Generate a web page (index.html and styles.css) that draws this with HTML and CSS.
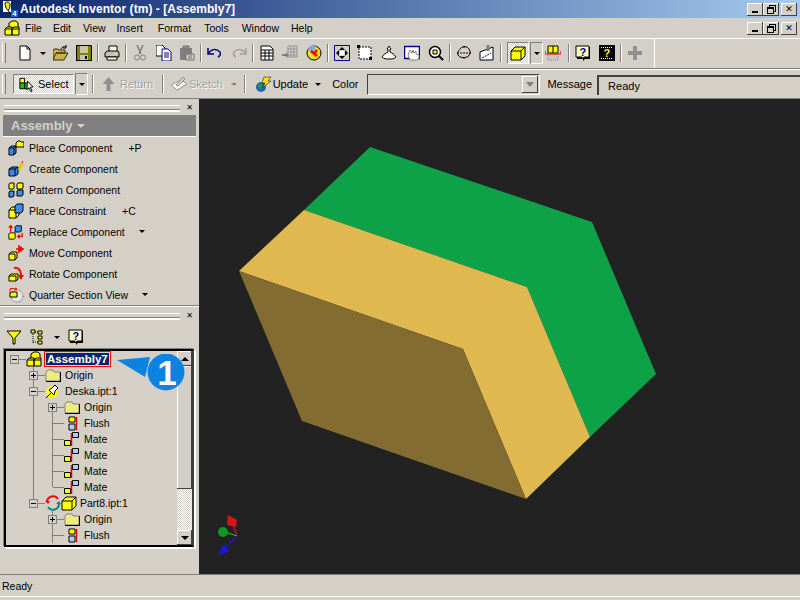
FILE: index.html
```html
<!DOCTYPE html>
<html>
<head>
<meta charset="utf-8">
<title>Autodesk Inventor</title>
<link rel="stylesheet" href="styles.css">
</head>
<body>

<div class="title">
  <svg class="ico16" viewBox="0 0 16 16"><path d="M1 0h8v11H1z" fill="#fff"/><path d="M3 2c2-2 5-1 5 2s-1 5-2 5-3-3-3-7zM6 9l3 5" fill="#e8e820" stroke="#000"/><rect x="9" y="9" width="7" height="7" fill="#1060e0"/><text x="10.500" y="15" class="tiny">4</text></svg>
  <span class="title-text">Autodesk Inventor (tm) - [Assembly7]</span>
  <span class="caps"><b class="cap"><i class="min"></i></b><b class="cap"><i class="rest"></i></b><b class="cap gap"><i class="x">✕</i></b></span>
</div>

<div class="menubar">
  <svg class="ico16" viewBox="0 0 16 16"><use href="#asm"/></svg>
  <span class="m-file">File</span><span>Edit</span><span class="m-view">View</span><span class="m-insert">Insert</span><span class="m-format">Format</span><span class="m-tools">Tools</span><span>Window</span><span>Help</span>
  <span class="caps"><b class="cap"><i class="min"></i></b><b class="cap"><i class="rest"></i></b><b class="cap gap"><i class="x">✕</i></b></span>
</div>

<div class="bar bar1">
  <i class="grip"></i>
  <svg class="t first" viewBox="0 0 16 16"><path d="M3 1h7l3 3v11H3z" fill="#fff" stroke="#000"/><path d="M10 1v3h3" fill="none" stroke="#000"/></svg>
  <i class="drop"></i>
  <svg class="t" viewBox="0 0 16 16"><path d="M0 14V5l1-1h4l1 1h6v3H3l-3 7h11l4-7H3" fill="#c8b050" stroke="#303000"/><path d="M8 4c1-2 3-3 5-2M13 0v3h-3" fill="none" stroke="#000"/></svg>
  <svg class="t" viewBox="0 0 16 16"><path d="M0 0h15l1 1v15H0z" fill="#000"/><path d="M1 1h14v14H1z" fill="#808000"/><path d="M4 1h8v7H4z" fill="#c8c8a0"/><path d="M4 10h8v5H4z" fill="#c0c0c0"/><path d="M9 11h2v3H9z" fill="#000"/></svg>
  <i class="sep"></i>
  <svg class="t" viewBox="0 0 16 16"><path d="M5 1h8v6H5z" fill="#fff" stroke="#000"/><path d="M1 8l2-2h11l1 2v4H1z" fill="#c0c0c0" stroke="#000"/><path d="M3 12h10v3H3z" fill="#fff" stroke="#000"/><path d="M10 9h3" stroke="#ff0"/></svg>
  <i class="sep"></i>
  <svg class="t" viewBox="0 0 16 16"><path d="M5 0l4 9M11 0L7 9" stroke="#808080" stroke-width="1.500" fill="none"/><circle cx="5" cy="12.500" r="2.500" fill="none" stroke="#808080"/><circle cx="11" cy="12.500" r="2.500" fill="none" stroke="#808080"/></svg>
  <svg class="t" viewBox="0 0 16 16"><path d="M0 0h6l3 3v8H0z" fill="#fff" stroke="#000"/><path d="M6 4h6l3 3v9H6z" fill="#fff" stroke="#000080"/><path d="M8 8h5M8 10h5M8 12h5" stroke="#000080"/></svg>
  <svg class="t" viewBox="0 0 16 16"><path d="M1 3h12v12H1z" fill="#808080"/><path d="M4 1h6v3H4z" fill="#909090" stroke="#707070"/><path d="M7 9h8v6H7z" fill="#d4d0c8" stroke="#707070"/><path d="M9 11h4M9 13h4" stroke="#707070"/></svg>
  <i class="sep"></i>
  <svg class="t" viewBox="0 0 16 16"><path d="M1 3v6h6M1 9c3-5 8-6 12-2 1 2 0 4-2 5" fill="none" stroke="#000080" stroke-width="1.500"/></svg>
  <svg class="t" viewBox="0 0 16 16"><path d="M15 3v6H9M15 9c-3-5-8-6-12-2-1 2 0 4 2 5" fill="none" stroke="#a0a0a0" stroke-width="1.500"/></svg>
  <i class="sep"></i>
  <svg class="t" viewBox="0 0 16 16"><path d="M2 1h9l3 3v11H2z" fill="#fff" stroke="#000"/><path d="M2 5h12M2 8h12M2 11h12M6 5v10M10 5v10" stroke="#000"/></svg>
  <svg class="t" viewBox="0 0 16 16"><path d="M6 1h9v11H6z" fill="#d8d8d8" stroke="#909090"/><path d="M6 4h9M6 7h9M6 10h9M9 1v11M12 1v11" stroke="#909090"/><path d="M0 9h4V7l3 3-3 3v-2H0z" fill="#808080"/></svg>
  <svg class="t" viewBox="0 0 16 16"><circle cx="8" cy="8" r="7" fill="#f4e020" stroke="#000"/><path d="M2 4a7 7 0 0 1 8-3l-2 6-2 2z" fill="#80a8e8"/><path d="M5 6l6 5M8 9l3-4" stroke="#f00" stroke-width="2.500"/></svg>
  <i class="sep"></i>
  <svg class="t" viewBox="0 0 16 16"><path d="M.5.5h15v15H.5z" fill="#d4d0c8" stroke="#000080"/><path d="M8 2l3 3H5zM8 14l3-3H5zM2 8l3-3v6zM14 8l-3-3v6z" fill="#000"/><path d="M6 6h4v4H6z" fill="#fff"/></svg>
  <svg class="t" viewBox="0 0 16 16"><path d="M2 2h12v12H2z" fill="#fff" stroke="#000" stroke-dasharray="2 1"/><path d="M0 0h3v3H0zM12 12h3v3h-3z" fill="#000"/></svg>
  <svg class="t" viewBox="0 0 16 16"><path d="M8 1l2 3H9v3c2 1 5 3 6 5-2 2-4 2-7 2s-5 0-7-2c1-2 4-4 6-5V4H6z" fill="#fff" stroke="#000"/></svg>
  <svg class="t" viewBox="0 0 16 16"><path d="M.5 1.500h15v12H.5z" fill="#fff" stroke="#000080" stroke-width="1.500"/><path d="M6 15l-2-5 2-5 2 3 1-3 1 3 2-2v3l3 1v3l-2 2z" fill="#fff" stroke="#808080"/></svg>
  <svg class="t" viewBox="0 0 16 16"><circle cx="7" cy="7" r="5.500" fill="#fff" stroke="#000" stroke-width="1.500"/><path d="M5 5h4v4H5z" fill="#f4f020" stroke="#000"/><path d="M11 11l4 4" stroke="#000" stroke-width="2"/></svg>
  <i class="sep"></i>
  <svg class="t" viewBox="0 0 16 16"><path d="M5 3c2-2 6-2 8 1 2 3 1 7-2 8-3 1-7 1-9-2-1-3 1-5 3-7" fill="none" stroke="#000"/><path d="M1 8h14M8 1v3M8 12v3" stroke="#000" stroke-dasharray="2 1"/></svg>
  <svg class="t" viewBox="0 0 16 16"><path d="M1 7l13-5v13H1z" fill="#fff" stroke="#000"/><path d="M9 0v6" stroke="#808080" stroke-width="3"/><path d="M3 13l9-5" stroke="#000080" stroke-dasharray="2 1"/></svg>
  <i class="sep"></i>
  <span class="pressed"><svg class="t" viewBox="0 0 16 16"><path d="M1 6l4-4h10v9l-4 4H1z" fill="#ff0"/><path d="M1 6h10v9H1zM1 6l4-4h10v9l-4 4M11 6l4-4" fill="none" stroke="#000"/></svg></span>
  <i class="drop boxed"></i>
  <svg class="t sec" viewBox="0 0 16 16"><path d="M3 1h10v7H3z" fill="#ff0" stroke="#000"/><path d="M8 1v7" stroke="#000"/><path d="M3 9h10v6H3z" fill="#c8c8c8" stroke="#808080" stroke-dasharray="1 1"/><path d="M0 6v3h16V6" fill="none" stroke="#f00" stroke-width="1.200"/></svg>
  <i class="sep"></i>
  <svg class="t" viewBox="0 0 16 16"><use href="#helpq"/><text x="4.500" y="11" class="qmark blue">?</text></svg>
  <svg class="t" viewBox="0 0 16 16"><path d="M0 0h16v16H0z"/><path d="M2 2.500h12M2 13.500h12" stroke="#fff" stroke-dasharray="1 1"/><text x="4.500" y="12" class="qmark">?</text></svg>
  <i class="sep"></i>
  <svg class="t" viewBox="0 0 16 16"><path d="M6 1h4v5h5v4h-5v5H6v-5H1V6h5z" fill="#909090"/></svg>
  <i class="bar-end"></i>
</div>

<div class="bar bar2">
  <i class="grip"></i>
  <span class="select-btn"><svg class="sm" viewBox="0 0 18 16"><path d="M2 2h5v5H2z" fill="#ff0" stroke="#000"/><path d="M2 7h5v6H2zM7 7h5v6H7z" fill="#00d000" stroke="#000"/><path d="M10 5l6 6-3 .5 2 4-1.500 .5-2-4-2 2z" fill="#fff" stroke="#000"/></svg>Select</span>
  <i class="drop boxed low"></i>
  <i class="sep s1"></i>
  <span class="off ret"><svg class="sm" viewBox="0 0 14 16"><path d="M7 1l6 7H9v7H5V8H1z" fill="#909090"/></svg>Return</span>
  <i class="sep s2"></i>
  <span class="off sketch"><svg class="sm wide" viewBox="0 0 18 16"><path d="M1 9l10-5 6 4-10 6z" fill="#fff" stroke="#909090"/><path d="M6 9l7-8 2 2-7 7z" fill="#d4d0c8" stroke="#909090"/></svg>Sketch<i class="arrow grey"></i></span>
  <i class="sep s3"></i>
  <span class="update"><svg class="sm wide" viewBox="0 0 18 16"><circle cx="6" cy="11" r="5" fill="#2060c0"/><path d="M3 9l3-2 2 4-3 3z" fill="#20a020"/><path d="M9 1h7l-3 4h3L7 12l3-5H7z" fill="#ffe000" stroke="#000" stroke-width=".5"/></svg>Update<i class="arrow"></i></span>
  <span class="color-label">Color</span>
  <span class="combo"><i class="combo-btn"><i class="arrow grey"></i></i></span>
  <span class="msg-label">Message</span>
  <span class="msg">Ready</span>
</div>

<div class="main">
  <div class="side">
    <div class="pane-head"><i class="rule"></i><i class="close">✕</i></div>
    <div class="panel-title">Assembly <i class="arrow light"></i></div>
    <ul class="cmds">
      <li><svg viewBox="0 0 16 16"><path d="M1 8l2-2h5v7l-2 2H1z" fill="#3c8cf0" stroke="#000"/><path d="M1 8h5v7M6 8l2-2" fill="none" stroke="#000"/><path d="M8 3l2-2h2l1 1h3v5H8z" fill="#ff0" stroke="#000"/></svg><span class="cmd-name">Place Component</span><span class="key">+P</span></li>
      <li><svg viewBox="0 0 16 16"><path d="M1 8l3-2h6v7l-3 2H1z" fill="#3c8cf0" stroke="#000"/><path d="M1 8h6v7M7 8l3-2" fill="none" stroke="#000"/><path d="M11 9l3-7" stroke="#e8c000" stroke-width="2.500"/><path d="M14 2l1-2" stroke="#f00"/></svg><span class="cmd-name">Create Component</span></li>
      <li><svg viewBox="0 0 16 16"><path d="M1 2l1-1h4v5l-1 1H1zM9 2l1-1h5v5l-1 1H9z" fill="#ff0" stroke="#000"/><path d="M1 10l1-1h4v5l-1 1H1zM9 9l1-1h5v5l-1 1H9z" fill="#3c8cf0" stroke="#000"/></svg><span class="cmd-name">Pattern Component</span></li>
      <li><svg viewBox="0 0 16 16"><path d="M1 7l3-3h7v8l-3 3H1z" fill="#ff0" stroke="#000"/><path d="M1 7h7v8" fill="none" stroke="#000"/><path d="M7 3l2-2h6v7l-2 2H7z" fill="#3c8cf0" stroke="#000"/></svg><span class="cmd-name">Place Constraint</span><span class="key">+C</span></li>
      <li><svg viewBox="0 0 18 16"><path d="M8 2l1-1h6v6l-1 1H8z" fill="#3c8cf0" stroke="#000"/><path d="M1 10l1-1h6v6l-1 1H1z" fill="#ff0" stroke="#000"/><path d="M3 2v6M1 3l2-2 2 2M16 9v4h-5M13 11l-2 2 2 2" stroke="#f00" stroke-width="1.500" fill="none"/></svg><span class="cmd-name">Replace Component</span><i class="arrow"></i></li>
      <li><svg viewBox="0 0 16 16"><path d="M1 9l2-2h6v6l-2 2H1z" fill="#ff0" stroke="#000"/><path d="M1 9h6v6" fill="none" stroke="#000"/><path d="M8 4h4M11 1l4 3-4 3z" stroke="#f00" fill="#f00" stroke-width="1.500"/></svg><span class="cmd-name">Move Component</span></li>
      <li><svg viewBox="0 0 16 16"><path d="M1 10l2-2h7v5l-2 2H1z" fill="#ff0" stroke="#000"/><path d="M1 10h7v5" fill="none" stroke="#000"/><path d="M6 2c4-1 7 2 7 7" stroke="#f00" stroke-width="2" fill="none"/><path d="M10 9h6l-3 5z" fill="#f00"/></svg><span class="cmd-name">Rotate Component</span></li>
      <li><svg viewBox="0 0 16 16"><circle cx="9" cy="9" r="6" fill="#e4e4e4" stroke="#808080" stroke-dasharray="2 1"/><path d="M2 6l2-1h5v5H2z" fill="#ff0" stroke="#000"/><path d="M2 2v4M2 1.500h4M7 1l2 1-2 1z" stroke="#f00" fill="#f00"/></svg><span class="cmd-name">Quarter Section View</span><i class="arrow"></i></li>
    </ul>

    <div class="divider"></div>
    <div class="pane-head"><i class="rule"></i><i class="close">✕</i></div>
    <div class="tree-tools">
      <svg viewBox="0 0 16 16"><path d="M1 2h14L9 9v6H7V9z" fill="#ff0" stroke="#000"/></svg>
      <svg viewBox="0 0 16 16"><path d="M3 1v14M3 3h5M3 13h5" stroke="#000" stroke-dasharray="1 1" fill="none"/><path d="M1 1h4v3H1zM8 2h4v3H8zM8 7h4v3H8zM8 12h4v3H8z" fill="#ff0" stroke="#000"/></svg>
      <i class="arrow"></i>
      <svg viewBox="0 0 16 16"><use href="#helpq"/><text x="4.500" y="11" class="qmark blue">?</text></svg>
    </div>

    <div class="tree">
      <div class="tree-rows">
        <div class="row lvl0"><i class="box minus"></i><i class="stub"></i><svg viewBox="0 0 16 16"><use href="#asm"/></svg><span class="sel">Assembly7</span></div>
        <div class="row lvl1 g1"><i class="box plus"></i><i class="stub"></i><svg viewBox="0 0 16 16"><use href="#folder"/></svg><span>Origin</span></div>
        <div class="row lvl1 g1"><i class="box minus"></i><i class="stub"></i><svg viewBox="0 0 16 16"><use href="#pin"/></svg><span>Deska.ipt:1</span></div>
        <div class="row lvl2 g1 g2 g2-first"><i class="box plus"></i><i class="stub"></i><svg viewBox="0 0 16 16"><use href="#folder"/></svg><span>Origin</span></div>
        <div class="row leaf g1 g2"><i class="stub long"></i><svg viewBox="0 0 16 16"><use href="#flush"/></svg><span>Flush</span></div>
        <div class="row leaf g1 g2"><i class="stub long"></i><svg viewBox="0 0 16 16"><use href="#mate"/></svg><span>Mate</span></div>
        <div class="row leaf g1 g2"><i class="stub long"></i><svg viewBox="0 0 16 16"><use href="#mate"/></svg><span>Mate</span></div>
        <div class="row leaf g1 g2"><i class="stub long"></i><svg viewBox="0 0 16 16"><use href="#mate"/></svg><span>Mate</span></div>
        <div class="row leaf g1 g2 g2-last"><i class="stub long"></i><svg viewBox="0 0 16 16"><use href="#mate"/></svg><span>Mate</span></div>
        <div class="row lvl1 g1 g1-last part"><i class="box minus"></i><i class="stub"></i><svg class="cycle" viewBox="0 0 16 16"><path d="M2 7a6 6 0 0 1 11-3" fill="none" stroke="#f00" stroke-width="2"/><path d="M14 9a6 6 0 0 1-11 3" fill="none" stroke="#108080" stroke-width="2"/><path d="M0 6h5l-2 3z" fill="#f00"/><path d="M11 9h5l-2-3z" fill="#108080"/></svg><svg viewBox="0 0 16 16"><use href="#block"/></svg><span>Part8.ipt:1</span></div>
        <div class="row lvl2 g2"><i class="box plus"></i><i class="stub"></i><svg viewBox="0 0 16 16"><use href="#folder"/></svg><span>Origin</span></div>
        <div class="row leaf g2"><i class="stub long"></i><svg viewBox="0 0 16 16"><use href="#flush"/></svg><span>Flush</span></div>
      </div>
      <div class="vscroll">
        <i class="sb-btn"><i class="up"></i></i>
        <i class="sb-track"></i>
        <i class="sb-hatch"></i>
        <i class="sb-btn"><i class="down"></i></i>
      </div>
    </div>

    <!-- callout over the tree -->
    <svg class="callout" viewBox="0 0 72 44" width="72" height="44">
      <path d="M1 6L34 3 29 23z" fill="#0d83e0"/>
      <circle cx="50" cy="18" r="18.500" fill="#0d83e0"/>
      <text x="51" y="31" class="digit">1</text>
    </svg>
  </div>

  <div class="view">
    <svg viewBox="199 99 601 475" width="601" height="475">
      <polygon points="304,210 370,147 592,222 656,374 590,437 527,287" fill="#0ea248"/>
      <polygon points="239,271 304,210 527,287 590,437 526,499 463,349" fill="#e0b850"/>
      <polygon points="239,271 463,349 526,499 302,421" fill="#826c32"/>
      <path d="M237 536l-12-4" stroke="#18e018" fill="none"/>
      <path d="M237 536l-4-11" stroke="#e02020" fill="none"/>
      <path d="M237 536l-11 11" stroke="#2020e0" fill="none"/>
      <path d="M228 515l9 5-1 7-9-2z" fill="#d01818"/>
      <circle cx="223" cy="532" r="5" fill="#0e9a20"/>
      <path d="M218 555l6-11 5 8z" fill="#1818d8"/>
    </svg>
  </div>
</div>

<div class="status">Ready</div>

<svg class="defs" width="0" height="0">
  <symbol id="asm" viewBox="0 0 16 16"><path d="M5 3l3-2h4l2 2v5H5z" fill="#ff0" stroke="#000"/><path d="M1 9l2-2h5v8H1zM8 9l2-2h5v8H8z" fill="#ff0" stroke="#000"/><path d="M1 9h7M8 9h7" stroke="#000"/></symbol>
  <symbol id="helpq" viewBox="0 0 16 16"><path d="M2 2h13v12H10l-2 2v-2H2z" fill="#000"/><path d="M1 1h13v11H9l-2 2v-2H1z" fill="#ffffc8" stroke="#000"/></symbol>
  <symbol id="folder" viewBox="0 0 16 16"><path d="M1 5l2-2h5l1 2h6v9H1z" fill="#ecec80" stroke="#808080"/><path d="M1 14.500h15M15.500 5v10" stroke="#000"/></symbol>
  <symbol id="pin" viewBox="0 0 16 16"><circle cx="7" cy="9" r="6" fill="#ff0"/><path d="M1 15l5-5M4 7l5 5 1-4 3-3-3-3-3 3z" fill="#fff" stroke="#000"/></symbol>
  <symbol id="flush" viewBox="0 0 16 16"><path d="M5 2h6v5H5z" fill="#ff0" stroke="#000"/><path d="M5 9h6v6H5z" fill="#a8d0f0" stroke="#000"/><path d="M12.500 2v13" stroke="#e00000" stroke-width="1.500"/></symbol>
  <symbol id="mate" viewBox="0 0 16 16"><path d="M8.500 1.500h6v5h-6z" fill="#a8d0f0" stroke="#000"/><path d="M.5 9.500h6v5h-6z" fill="#ff0" stroke="#000"/><path d="M7.500 2v13" stroke="#e00000" stroke-width="1.500"/></symbol>
  <symbol id="block" viewBox="0 0 16 16"><path d="M1 6l4-4h10v9l-4 4H1z" fill="#ff0"/><path d="M1 6h10v9H1zM1 6l4-4h10v9l-4 4M11 6l4-4" fill="none" stroke="#000"/></symbol>
</svg>

</body>
</html>
```

FILE: styles.css
```css
html, body {
  margin: 0;
  padding: 0;
}

body {
  width: 800px;
  height: 600px;
  overflow: hidden;
  background-color: #d4d0c8;
  font-family: "Liberation Sans", Arial, sans-serif;
  font-size: 10.5px;
  color: #000;
  display: flex;
  flex-direction: column;
}

i {
  font-style: normal;
  display: block;
}

svg {
  flex: none;
  display: block;
}

.defs {
  position: absolute;
}

.tiny {
  font: bold 7px "Liberation Sans", sans-serif;
  fill: #fff;
}

.qmark {
  font: bold 11px "Liberation Sans", sans-serif;
  fill: #ff0;
}

.qmark.blue {
  fill: #000080;
}

.digit {
  font: bold 35px "Liberation Sans", sans-serif;
  fill: #fff;
  text-anchor: middle;
}

/* title bar */
.title {
  height: 18px;
  flex: none;
  display: flex;
  align-items: center;
  padding-left: 2px;
  background: linear-gradient(to right, #0a246a, #a6caf0);
  color: #fff;
  font-weight: bold;
}

.ico16 {
  width: 16px;
  height: 16px;
}

.title-text {
  margin-left: 2px;
  font-size: 12px;
  letter-spacing: 0.05px;
}

.caps {
  margin-left: auto;
  margin-right: 3px;
  display: flex;
}

.cap {
  width: 16px;
  height: 13px;
  background-color: #d4d0c8;
  box-shadow: inset -1px -1px 0 #404040, inset 1px 1px 0 #fff;
  display: flex;
  justify-content: center;
  align-items: center;
  position: relative;
}

.cap.gap {
  margin-left: 2px;
}

.cap .min {
  width: 6px;
  height: 2px;
  background-color: #000;
  margin-top: 6px;
}

.cap .rest {
  width: 5px;
  height: 4px;
  margin: 2px 2px 0 0;
  border: 1px solid #000;
  border-top-width: 2px;
  background-color: #d4d0c8;
  box-shadow: 2px -2px 0 -1px #d4d0c8, 2px -2px 0 0 #000;
}

.cap .x {
  font-size: 9px;
  font-weight: bold;
  color: #000;
  font-family: "DejaVu Sans", sans-serif;
}

/* menu */
.menubar {
  height: 20px;
  flex: none;
  display: flex;
  align-items: center;
  padding-left: 4px;
}

.menubar span {
  margin-left: 5px;
  margin-right: 7px;
}

.menubar .m-file { margin-right: 6px; }
.menubar .m-view { margin-right: 6px; }
.menubar .m-insert { margin-right: 10px; }
.menubar .m-format { margin-right: 8px; }
.menubar .m-tools { margin-right: 8px; }

.menubar .caps {
  margin: 0 3px 0 auto;
}

/* toolbars */
.bar {
  flex: none;
  display: flex;
  align-items: center;
  border-top: 1px solid #fff;
  border-bottom: 1px solid #808080;
  box-sizing: border-box;
  font-size: 11px;
}

.bar1 {
  height: 31px;
  padding-bottom: 1px;
}

.bar2 {
  height: 30px;
}

.grip {
  width: 2px;
  height: 20px;
  margin: 0 8px 0 2px;
  border-left: 1px solid #fff;
  border-right: 1px solid #808080;
}

.t {
  width: 16px;
  height: 16px;
  margin: 0 3.75px;
}

.t.first {
  margin-left: 3px;
}

.t.sec {
  margin: 0 5.75px 0 1.75px;
}

.sep {
  width: 0;
  height: 18px;
  margin: 0 1.25px;
  border-left: 1px solid #808080;
  border-right: 1px solid #fff;
}

.drop {
  width: 12px;
  height: 20px;
  position: relative;
}

.drop::after,
.arrow {
  content: "";
  width: 0;
  height: 0;
  border-left: 3px solid transparent;
  border-right: 3px solid transparent;
  border-top: 3px solid #000;
}

.drop::after {
  position: absolute;
  left: 3px;
  top: 9px;
}

.boxed {
  width: 11px;
  margin-left: 1px;
  border: 1px solid #fff;
  border-top-color: #808080;
  border-left-color: #808080;
}

.pressed {
  display: block;
  padding: 2px 1px;
  margin-left: 4px;
  border: 1px solid #808080;
  border-right-color: #fff;
  border-bottom-color: #fff;
  background: repeating-conic-gradient(#fff 0 25%, #d4d0c8 0 50%) 0 0 / 2px 2px;
}

.pressed .t {
  margin: 0 1px;
}

.bar-end {
  width: 1px;
  height: 29px;
  margin-left: 8px;
  background-color: #fff;
}

.select-btn {
  display: flex;
  align-items: center;
  width: 61px;
  height: 20px;
  box-sizing: border-box;
  padding-left: 4px;
  margin-left: -1px;
  border: 1px solid #808080;
  border-right-color: #fff;
  border-bottom-color: #fff;
  background: repeating-conic-gradient(#fff 0 25%, #d4d0c8 0 50%) 0 0 / 2px 2px;
}

.sm {
  width: 17px;
  height: 16px;
  margin-right: 3px;
}

.sm.wide {
  width: 18px;
}

.low {
  margin-left: 1px;
}

.s1 {
  margin: 0 6px 0 4px;
}

.s2 {
  margin: 0 6px 0 9px;
}

.s3 {
  margin: 0 9px 0 7px;
}

.off {
  display: flex;
  align-items: center;
  color: #a0a0a0;
  text-shadow: 1px 1px 0 #fff;
}

.sketch .sm {
  margin-right: 1px;
}

.arrow {
  display: block;
  margin-left: 8px;
  flex: none;
}

.arrow.grey {
  border-top-color: #808080;
}

.arrow.light {
  display: inline-block;
  margin-left: 1px;
  vertical-align: 2px;
  border-left-width: 4px;
  border-right-width: 4px;
  border-top: 4px solid #d4d0c8;
}

.update {
  display: flex;
  align-items: center;
}

.update .sm {
  margin-right: 0;
}

.update .arrow {
  margin-left: 7px;
}

.color-label {
  margin-left: 11px;
}

.combo {
  width: 173px;
  height: 21px;
  margin-left: 9px;
  box-sizing: border-box;
  border: 1px solid #404040;
  border-right-color: #fff;
  border-bottom-color: #fff;
  display: flex;
  justify-content: flex-end;
  align-items: center;
}

.combo-btn {
  width: 16px;
  height: 17px;
  margin-right: 1px;
  box-shadow: inset -1px -1px 0 #404040, inset 1px 1px 0 #fff;
  display: flex;
  justify-content: center;
  align-items: center;
}

.combo-btn .arrow {
  margin: 0;
  border-left-width: 4px;
  border-right-width: 4px;
  border-top-width: 5px;
}

.msg-label {
  margin-left: 7px;
}

.msg {
  flex: 1;
  margin: 2px 0 0 5px;
  height: 18px;
  line-height: 18px;
  padding-left: 9px;
  border-left: 2px solid #404040;
  border-top: 2px solid #404040;
}

/* main area */
.main {
  flex: 1;
  min-height: 0;
  display: flex;
  position: relative;
}

.side {
  width: 199px;
  flex: none;
  position: relative;
}

.view {
  flex: 1;
  background-color: #222;
}

.pane-head {
  height: 16px;
  display: flex;
  align-items: center;
  padding: 0 4px;
}

.rule {
  flex: 1;
  height: 3px;
  border-top: 1px solid #fff;
  border-bottom: 1px solid #808080;
  box-shadow: 0 2px 0 #fff;
}

.close {
  width: 11px;
  margin-left: 4px;
  text-align: center;
  font-family: "DejaVu Sans", sans-serif;
  font-size: 8px;
  font-weight: bold;
}

.panel-title {
  height: 21px;
  margin: 0 3px;
  background-color: #808080;
  color: #d4d0c8;
  font-size: 13px;
  font-weight: bold;
  line-height: 21px;
  padding-left: 8px;
  border-bottom: 1px solid #fff;
}

.cmds {
  list-style: none;
  margin: 0;
  padding: 0 0 0 8px;
}

.cmds li {
  height: 21px;
  display: flex;
  align-items: center;
}

.cmds svg {
  width: 16px;
  height: 16px;
  margin-right: 5px;
}

.key {
  margin-left: 16px;
}

.cmds .arrow {
  margin-left: 14px;
}

.divider {
  height: 0;
  border-top: 1px solid #808080;
  border-bottom: 1px solid #fff;
}

.tree-tools {
  height: 22px;
  margin-top: 3px;
  display: flex;
  align-items: center;
  padding-left: 6px;
}

.tree-tools svg {
  width: 16px;
  height: 16px;
  margin-right: 8px;
}

.tree-tools .arrow {
  margin: 0 8px 0 0;
}

.tree {
  width: 186px;
  height: 194px;
  margin: 1px 0 0 4px;
  display: flex;
  border: 2px solid #000;
  border-right-color: #404040;
  box-shadow: -1px -1px 0 #808080, 1px 1px 0 #fff, 2px 2px 0 #fff;
  overflow: hidden;
  position: relative;
}

.tree-rows {
  flex: 1;
  min-width: 0;
}

.row {
  height: 16px;
  display: flex;
  align-items: center;
  position: relative;
}

.row svg {
  width: 16px;
  height: 16px;
  margin-right: 4px;
}

.lvl0 { padding-left: 4px; }
.lvl1 { padding-left: 23px; }
.lvl2 { padding-left: 42px; }
.leaf { padding-left: 47px; }

/* the vertical guides of the tree */
.g1::before,
.g2::after {
  content: "";
  position: absolute;
  top: 0;
  bottom: 0;
  width: 1px;
  background-color: #808080;
}

.g1::before { left: 27px; }
.g2::after { left: 46px; }

.g1-last::before { bottom: 50%; }
.g2-first::after { top: 50%; }
.g2-last::after { bottom: 50%; }

.box {
  width: 7px;
  height: 7px;
  border: 1px solid #808080;
  background-color: #d4d0c8;
  position: relative;
  z-index: 1;
  flex: none;
}

.box::before,
.box::after {
  content: "";
  position: absolute;
  background-color: #000;
}

.box::before {
  left: 1px;
  top: 3px;
  width: 5px;
  height: 1px;
}

.plus::after {
  left: 3px;
  top: 1px;
  width: 1px;
  height: 5px;
}

.stub {
  width: 7px;
  height: 1px;
  background-color: #808080;
  flex: none;
}

.stub.long {
  width: 11px;
}

.sel {
  background-color: #0a246a;
  color: #fff;
  font-size: 11.5px;
  font-weight: bold;
  line-height: 12px;
  padding: 0 1px;
  outline: 1px solid #f00;
  outline-offset: 1px;
}

.row svg.cycle {
  margin-right: 0;
}

.part svg:last-of-type {
  margin-right: 3px;
}

.vscroll {
  width: 15px;
  flex: none;
  display: flex;
  flex-direction: column;
  background-color: #d4d0c8;
}

.sb-btn {
  height: 15px;
  flex: none;
  box-shadow: inset -1px -1px 0 #404040, inset 1px 1px 0 #fff;
  display: flex;
  justify-content: center;
  align-items: center;
}

.up,
.down {
  width: 0;
  height: 0;
  border-left: 4px solid transparent;
  border-right: 4px solid transparent;
}

.up { border-bottom: 4px solid #000; }
.down { border-top: 4px solid #000; }

.sb-track {
  flex: 1;
  box-shadow: inset -1px -1px 0 #404040, inset 1px 1px 0 #fff;
}

.sb-hatch {
  height: 41px;
  flex: none;
  background: repeating-conic-gradient(#fff 0 25%, #d4d0c8 0 50%) 0 0 / 2px 2px;
}

/* numbered callout */
.callout {
  position: absolute;
  left: 116px;
  top: 255px;
}

.status {
  height: 26px;
  flex: none;
  box-sizing: border-box;
  padding: 5px 0 0 2px;
  border-top: 1px solid #808080;
  box-shadow: inset 0 -3px 0 #d4d0c8, inset 0 -4px 0 #fff;
}
```
